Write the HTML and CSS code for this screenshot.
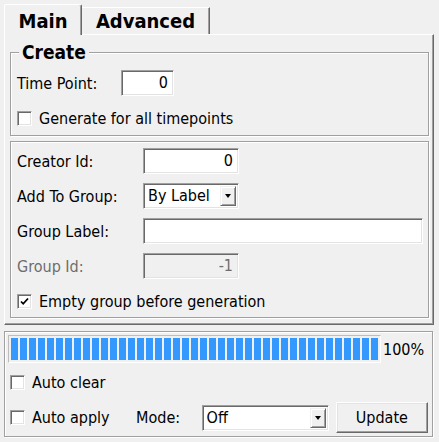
FILE: index.html
```html
<!DOCTYPE html>
<html>
<head>
<meta charset="utf-8">
<link rel="stylesheet" href="styles.css">
</head>
<body>
<div class="app">
  <div class="tabs">
    <div class="tab active">Main</div>
    <div class="tab">Advanced</div>
  </div>
  <div class="pane">
    <div class="group create">
      <div class="legend">Create</div>
      <div class="row first">
        <span class="label w-tp">Time Point:</span>
        <div class="field num w-tpf">0</div>
      </div>
      <div class="row">
        <div class="check"><span class="box"></span><span>Generate for all timepoints</span></div>
      </div>
    </div>
    <div class="group props">
      <div class="row">
        <span class="label w-lbl">Creator Id:</span>
        <div class="field num w-f">0</div>
      </div>
      <div class="row">
        <span class="label w-lbl">Add To Group:</span>
        <div class="field combo w-f"><span class="combo-text">By Label</span><span class="drop"><span class="arrow"></span></span></div>
      </div>
      <div class="row">
        <span class="label w-lbl">Group Label:</span>
        <div class="field grow"></div>
      </div>
      <div class="row">
        <span class="label w-lbl disabled">Group Id:</span>
        <div class="field num w-f disabled-field">-1</div>
      </div>
      <div class="row">
        <div class="check"><span class="box"><svg width="9" height="9" viewBox="0 0 9 9"><polyline points="1,4.5 3.2,6.8 8,1.5" fill="none" stroke="#000" stroke-width="1.8"/></svg></span><span>Empty group before generation</span></div>
      </div>
    </div>
  </div>
  <div class="group bottom">
    <div class="progress-row">
      <div class="progress"><div class="bar"></div></div>
      <span class="pct">100%</span>
    </div>
    <div class="row brow">
      <div class="check"><span class="box"></span><span>Auto clear</span></div>
    </div>
    <div class="row brow apply">
      <div class="check w-apply"><span class="box"></span><span>Auto apply</span></div>
      <span class="label w-mode">Mode:</span>
      <div class="field combo w-mcombo"><span class="combo-text">Off</span><span class="drop"><span class="arrow"></span></span></div>
      <div class="button">Update</div>
    </div>
  </div>
</div>
</body>
</html>
```

FILE: styles.css
```css
* { box-sizing: border-box; }

html, body {
  margin: 0;
  padding: 0;
  background: #f0f0f0;
}

body {
  width: 439px;
  height: 442px;
  overflow: hidden;
  font-family: "DejaVu Sans Condensed", "DejaVu Sans", sans-serif;
  font-stretch: condensed;
  font-size: 16px;
  color: #000;
}

.app {
  padding: 4px 5px 0 4px;
  display: flex;
  flex-direction: column;
}

/* Tabs */
.tabs {
  display: flex;
  align-items: flex-end;
  height: 30px;
}

.tab {
  font-weight: bold;
  font-size: 20px;
  line-height: 22px;
  text-align: center;
  background: #f0f0f0;
  border-top: 1px solid #fff;
  border-right: 1px solid #696969;
  box-shadow: inset -1px 0 0 #a0a0a0;
  padding: 2px 0 2px 0;
  width: 128px;
  height: 27px;
}

.tab.active {
  position: relative;
  z-index: 1;
  width: 78px;
  height: 31px;
  padding-top: 5px;
  padding-bottom: 3px;
  margin-bottom: -1px;
  border-left: 1px solid #fff;
  border-top-left-radius: 2px;
  border-top-right-radius: 2px;
}

/* Pane */
.pane {
  border-top: 1px solid #fff;
  border-left: 1px solid #fff;
  border-right: 1px solid #696969;
  border-bottom: 1px solid #696969;
  box-shadow: inset -1px -1px 0 #a0a0a0;
  padding: 17px 4px 6px 5px;
  display: flex;
  flex-direction: column;
}

/* Group boxes */
.group {
  border: 1px solid #a0a0a0;
  box-shadow: 1px 1px 0 #fff, inset 1px 1px 0 #fff;
}

.create {
  padding: 0 6px 4px 6px;
}

.legend {
  width: max-content;
  margin: -11px 0 0 2px;
  padding: 0 3px;
  background: #f0f0f0;
  font-weight: bold;
  font-size: 19px;
  line-height: 20px;
}

.row {
  display: flex;
  align-items: center;
  height: 26px;
  margin-top: 9px;
}

.create .row.first {
  margin-top: 8px;
}

.props {
  margin-top: 5px;
  padding: 6px 5px 3px 6px;
}

.props .row:first-child {
  margin-top: 0;
}

.label {
  white-space: nowrap;
}

.disabled {
  color: #6d6d6d;
}

.w-tp { width: 104px; }
.w-tpf { width: 53px; }
.w-lbl { width: 126px; }
.w-f { width: 96px; }
.grow { flex: 1; }

/* Fields */
.field {
  height: 26px;
  background: #fff;
  border: 1px solid;
  border-color: #a0a0a0 #fff #fff #a0a0a0;
  box-shadow: inset 1px 1px 0 #696969, inset -1px -1px 0 #e3e3e3;
  display: flex;
  align-items: center;
  padding: 0 5px 0 4px;
  line-height: 18px;
}

.field.num {
  justify-content: flex-end;
}

.disabled-field {
  background: #f0f0f0;
  color: #6d6d6d;
}

.combo {
  padding: 2px 2px 2px 3px;
  align-items: stretch;
}

.combo-text {
  flex: 1;
  display: flex;
  align-items: center;
  padding-left: 1px;
}

.drop {
  width: 16px;
  background: #f0f0f0;
  border: 1px solid;
  border-color: #f0f0f0 #696969 #696969 #f0f0f0;
  box-shadow: inset 1px 1px 0 #fff, inset -1px -1px 0 #a0a0a0;
  display: flex;
  align-items: center;
  justify-content: center;
}

.arrow {
  width: 0;
  height: 0;
  border-left: 3.5px solid transparent;
  border-right: 3.5px solid transparent;
  border-top: 4px solid #000;
}

/* Checkboxes */
.check {
  display: flex;
  align-items: center;
  white-space: nowrap;
}

.box {
  width: 15px;
  height: 15px;
  margin-right: 7px;
  background: #fff;
  border: 1px solid;
  border-color: #a0a0a0 #fff #fff #a0a0a0;
  box-shadow: inset 1px 1px 0 #696969, inset -1px -1px 0 #e3e3e3;
  display: flex;
  align-items: center;
  justify-content: center;
  flex-shrink: 0;
}

.box svg {
  display: block;
}

/* Bottom group */
.bottom {
  margin-top: 6px;
  margin-right: 1px;
  padding: 3px 4px 3px 3px;
}

.progress-row {
  display: flex;
  align-items: center;
}

.progress {
  width: 373px;
  height: 28px;
  border: 1px solid;
  border-color: #bcbcbc #fff #fff #bcbcbc;
  padding: 2px 2px 2px 2px;
}

.bar {
  height: 100%;
  background: repeating-linear-gradient(90deg, #3399ff 0 7px, transparent 7px 9px);
}

.pct {
  margin-left: 2px;
}

.brow {
  padding-left: 2px;
  margin-top: 6px;
}

.apply {
  margin-top: 7px;
  height: 31px;
}

.w-apply { width: 127px; }
.w-mode { width: 66px; }
.w-mcombo { width: 128px; }

.button {
  width: 93px;
  height: 31px;
  margin-left: 7px;
  background: #f0f0f0;
  border: 1px solid;
  border-color: #fff #696969 #696969 #fff;
  box-shadow: inset -1px -1px 0 #a0a0a0, inset 1px 1px 0 #e3e3e3;
  display: flex;
  align-items: center;
  justify-content: center;
}
```
